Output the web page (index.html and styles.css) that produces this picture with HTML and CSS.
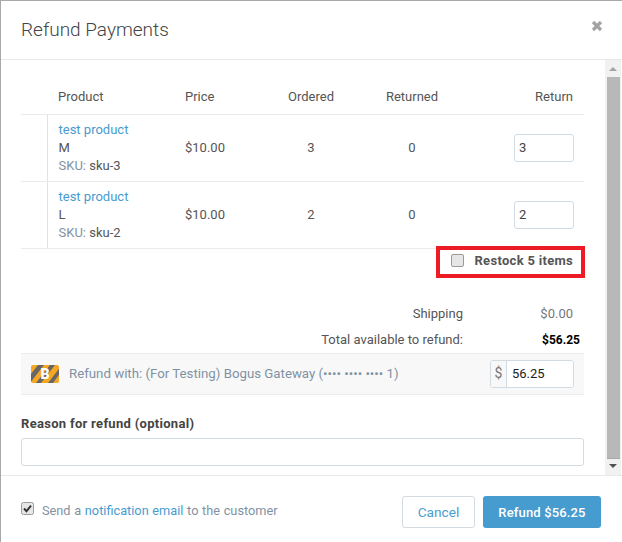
FILE: index.html
```html
<!DOCTYPE html>
<html lang="en">
<head>
<meta charset="utf-8">
<title>Refund Payments</title>
<link rel="stylesheet" href="styles.css">
</head>
<body>
<div class="modal">
  <header class="modal-header">
    <h1 class="title">Refund Payments</h1>
    <svg class="close" width="12" height="12" viewBox="0 0 12 12" aria-label="Close"><path d="M2 2l8 8M10 2l-8 8" stroke="#a3a3a3" stroke-width="3.2" fill="none"/></svg>
  </header>
  <div class="modal-main">
    <div class="content">
      <table class="items">
        <colgroup><col class="c-gutter"><col class="c-product"><col class="c-price"><col class="c-ordered"><col class="c-returned"><col class="c-return"></colgroup>
        <thead>
          <tr><th></th><th class="product">Product</th><th>Price</th><th class="center">Ordered</th><th class="center">Returned</th><th class="right">Return</th></tr>
        </thead>
        <tbody>
          <tr>
            <td class="gutter"></td>
            <td class="product"><a href="#">test product</a><br>M<br><span class="muted">SKU:</span> sku-3</td>
            <td>$10.00</td><td class="center">3</td><td class="center">0</td>
            <td class="right"><input class="qty" value="3"></td>
          </tr>
          <tr>
            <td class="gutter"></td>
            <td class="product"><a href="#">test product</a><br>L<br><span class="muted">SKU:</span> sku-2</td>
            <td>$10.00</td><td class="center">2</td><td class="center">0</td>
            <td class="right"><input class="qty" value="2"></td>
          </tr>
        </tbody>
      </table>
      <div class="restock">
        <input type="checkbox" class="check">
        <label class="restock-label">Restock 5 items</label>
        <span class="highlight"></span>
      </div>
      <div class="totals">
        <div class="total-row"><span class="total-label">Shipping</span><span class="total-value ship">$0.00</span></div>
        <div class="total-row"><span class="total-label">Total available to refund:</span><span class="total-value strong">$56.25</span></div>
      </div>
      <div class="gateway">
        <svg class="badge" width="28" height="18" viewBox="0 0 28 18">
          <defs><clipPath id="rounded"><rect width="28" height="18" rx="2"/></clipPath></defs>
          <g clip-path="url(#rounded)">
            <rect width="28" height="18" fill="#f5a623"/>
            <path d="M-7 18L7 0h6L-1 18zM5 18L19 0h5L10 18zM17 18L31 0h4L22 18z" fill="#666"/>
          </g>
          <text x="14" y="14" class="badge-letter">B</text>
        </svg>
        <span class="gateway-text">Refund with: (For Testing) Bogus Gateway (•••• •••• •••• 1)</span>
        <div class="amount"><span class="addon">$</span><input class="amount-input" value="56.25"></div>
      </div>
      <label class="reason-label">Reason for refund (optional)</label>
      <input class="reason">
    </div>
    <div class="scrollbar">
      <span class="arrow up"></span>
      <span class="thumb"></span>
      <span class="arrow down"></span>
    </div>
  </div>
  <footer class="modal-footer">
    <div class="notify">
      <svg class="fake-check" width="13" height="13" viewBox="0 0 13 13"><rect x=".5" y=".5" width="12" height="12" rx="2" fill="#e6e6e6" stroke="#9a9a9a"/><path d="M3 6.5l2.5 2.7L10 3.6" fill="none" stroke="#333" stroke-width="2"/></svg>
      <span>Send a <a href="#">notification email</a> to the customer</span>
    </div>
    <div class="actions">
      <button class="btn btn-cancel">Cancel</button>
      <button class="btn btn-primary">Refund $56.25</button>
    </div>
  </footer>
</div>
</body>
</html>
```
FILE: styles.css
```css
* { box-sizing: border-box; }
html, body { margin: 0; height: 100%; overflow: hidden; }
body {
  background: #a9a9a9;
  padding: 1px 0 0 1px;
  font: 13px/18px Roboto, "Liberation Sans", sans-serif;
  color: #555;
}
a { color: #479ccf; text-decoration: none; }
.modal { background: #fff; height: 541px; display: flex; flex-direction: column; }
.modal-header {
  height: 59px; flex: none; display: flex; justify-content: space-between; align-items: flex-start;
  border-bottom: 1px solid #e6e8ea; padding: 0 19px 0 20px;
}
.title { margin: 17px 0 0; font: 300 19px/24px Roboto, sans-serif; color: #444; }
.close { margin-top: 19px; }
.modal-main { height: 415px; flex: none; display: flex; }
.content { width: 604px; padding: 0 20px; }
.scrollbar { width: 16px; background: #f1f1f1; display: flex; flex-direction: column; align-items: center; }
.arrow { width: 0; height: 0; border-left: 4px solid transparent; border-right: 4px solid transparent; flex: none; }
.arrow.up { border-bottom: 4px solid #a3a3a3; margin: 7px 0 6px; }
.arrow.down { border-top: 4px solid #505050; margin: 5px 0 7px; }
.thumb { width: 13px; flex: 1; background: #b8b8b8; border: 1px solid #a8a8a8; border-width: 0 0 1px; }

.items { width: 563px; border-collapse: collapse; table-layout: fixed; }
.c-gutter { width: 26px; } .c-product { width: 128px; } .c-price { width: 85px; }
.c-ordered { width: 102px; } .c-returned { width: 100px; } .c-return { width: 122px; }
.items th { height: 54px; padding: 20px 10px 0; font-weight: 400; text-align: left; border-bottom: 1px solid #e9ebed; }
.items td { height: 67px; padding: 0 10px; border-bottom: 1px solid #e9ebed; }
.items th.center, .items td.center { text-align: center; }
.items th.right, .items td.right { text-align: right; }
.items th.right { padding-right: 11px; }
.items td.gutter { padding: 0; border-right: 1px solid #dfe3e8; }
.items th.product { padding-left: 11px; }
.items td.product { padding: 1px 0 0 11px; }
.muted { color: #7f92a3; }
.qty, .amount-input, .reason { font: 13px Roboto, sans-serif; color: #444; outline: none; background: #fff; }
.qty { width: 60px; height: 28px; padding: 0 4px; border: 1px solid #d3dbe2; border-radius: 3px; display: block; margin-left: auto; }

.restock { position: relative; width: 563px; height: 32px; display: flex; justify-content: flex-end; align-items: center; padding: 0 11px 8px 0; }
.check { appearance: none; width: 13px; height: 13px; margin: 0 10px 0 0; background: #e6e6e6; border: 1px solid #9a9a9a; border-radius: 2px; }
.restock-label { font-weight: 700; letter-spacing: .3px; }
.highlight { position: absolute; left: 415px; top: -3px; width: 149px; height: 32px; border: 4px solid #ed1c24; }

.totals { width: 563px; padding-top: 24px; height: 72px; }
.total-row { display: flex; justify-content: flex-end; height: 26px; }
.total-value { width: 121px; text-align: right; }
.total-value.ship { color: #777; padding-right: 11px; }
.total-value.strong { font-weight: 700; font-size: 12px; color: #000; padding-right: 4px; }

.gateway { width: 563px; height: 42px; background: #f8f8f8; border: 1px solid #ececec; border-width: 1px 0; display: flex; align-items: center; padding: 0 10px; }
.badge { flex: none; margin-right: 10px; }
.badge-letter { font: 900 14px Roboto, sans-serif; fill: #fff; text-anchor: middle; }
.gateway-text { flex: 1; color: #7f92a3; font-size: 13.25px; }
.amount { display: flex; width: 84px; height: 28px; border: 1px solid #d3dbe2; border-radius: 3px; background: #fff; overflow: hidden; }
.addon { width: 16px; flex: none; background: #f8f8f8; border-right: 1px solid #d3dbe2; text-align: center; line-height: 24px; color: #777; font-size: 14px; }
.amount-input { flex: 1; min-width: 0; border: 0; padding: 0 5px; color: #222; }

.reason-label { display: block; margin-top: 20px; font-weight: 700; letter-spacing: .3px; color: #444; }
.reason { display: block; width: 563px; height: 28px; margin-top: 5px; border: 1px solid #d3dbe2; border-radius: 3px; }

.modal-footer { flex: 1; border-top: 1px solid #e6e8ea; display: flex; justify-content: space-between; align-items: flex-start; padding: 20px 21px 0 20px; }
.notify { display: flex; align-items: flex-start; color: #7f92a3; padding-top: 6px; font-size: 12.75px; word-spacing: .5px; }
.fake-check { margin-right: 8px; }
.actions { display: flex; gap: 8px; }
.btn { height: 32px; border-radius: 3px; font: 13.7px Roboto, sans-serif; padding: 0; }
.btn-cancel { width: 73px; background: #fff; color: #479ccf; border: 1px solid #d3dbe2; }
.btn-primary { width: 118px; background: #479ccf; color: #fff; border: 0; font-weight: 500; font-size: 13px; letter-spacing: .15px; }
```
